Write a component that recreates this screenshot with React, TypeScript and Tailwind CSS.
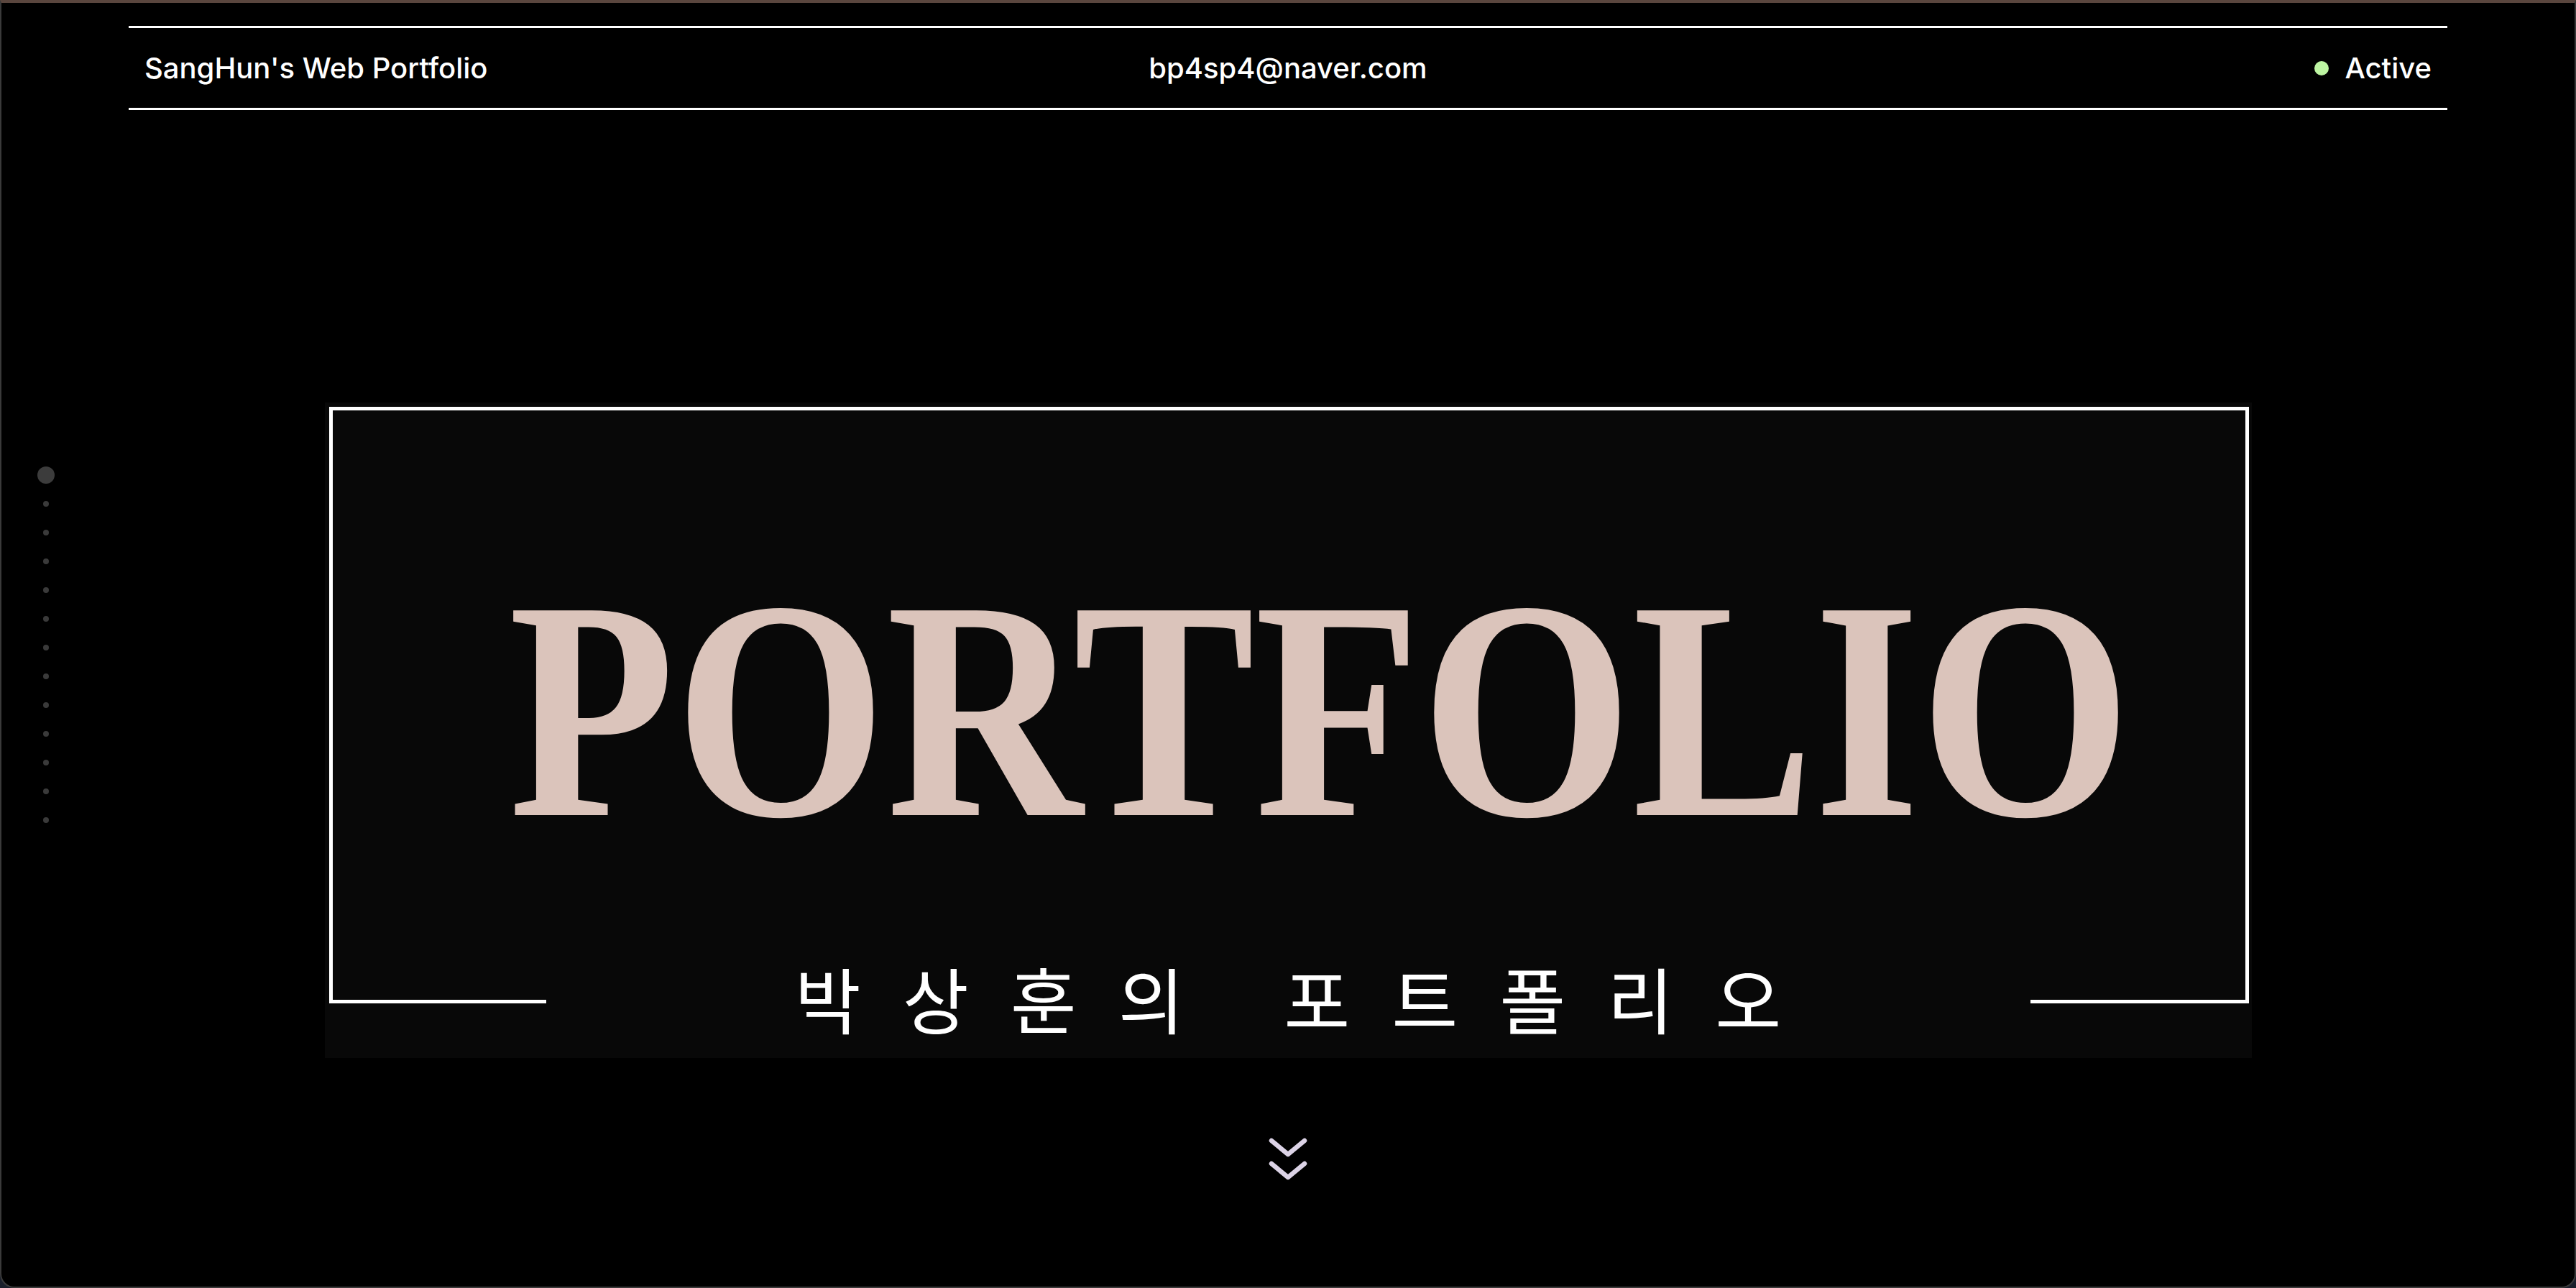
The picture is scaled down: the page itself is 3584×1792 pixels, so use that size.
export default function App() {
  const dots = Array.from({ length: 12 });

  return (
    <div className="h-[1792px] w-full bg-[#1a1f2b]">
      <div className="relative h-full overflow-hidden rounded-b-[20px] border-x-2 border-b-2 border-t-4 border-[#3a3a3a] border-t-[#5a463e] bg-black">
        {/* header */}
        <header className="mx-auto mt-[32px] grid h-[117px] w-[3226px] grid-cols-3 items-center border-y-[3px] border-white px-[22px] font-['Inter',sans-serif] text-[40px] font-medium text-white">
          <span className="justify-self-start">SangHun's Web Portfolio</span>
          <span className="justify-self-center">bp4sp4@naver.com</span>
          <span className="flex items-center gap-[22px] justify-self-end">
            <span className="h-[20px] w-[20px] rounded-full bg-[#bdf5a2]"></span>
            Active
          </span>
        </header>

        {/* side nav dots */}
        <nav className="absolute left-[42px] top-[637px] flex w-[40px] flex-col">
          <div className="flex h-[40px] items-center justify-center">
            <span className="h-[24px] w-[24px] rounded-full bg-[#3c3c3c]"></span>
          </div>
          {dots.map((_, i) => (
            <div key={i} className="flex h-[40px] items-center justify-center">
              <span className="h-[8px] w-[8px] rounded-full bg-[#3a3a3a]"></span>
            </div>
          ))}
        </nav>

        {/* hero */}
        <section className="mx-auto mt-[407px] h-[912px] w-[2681px] bg-[#080808] pl-[6px] pr-[4px] pt-[6px]">
          <div className="flex flex-col">
            <div className="flex h-[774px] justify-center border-x-[5px] border-t-[5px] border-white pl-[86px] pt-[199px]">
              <h1 className="scale-x-[0.87] whitespace-nowrap font-['Liberation_Serif',serif] text-[435px] font-bold leading-none text-[#dbc4bb]">
                PORTFOLIO
              </h1>
            </div>
            <div className="flex items-start">
              <div className="h-[56px] w-[302px] border-b-[5px] border-l-[5px] border-white"></div>
              <div className="flex flex-1 justify-center">
                <p className="-mt-[2px] whitespace-nowrap pl-[58px] font-['Noto_Sans_CJK_KR',sans-serif] text-[100px] font-normal leading-none tracking-[58px] text-white">
                  박상훈의 포트폴리오
                </p>
              </div>
              <div className="h-[56px] w-[304px] border-b-[5px] border-r-[5px] border-white"></div>
            </div>
          </div>
        </section>

        {/* scroll hint */}
        <div className="mt-[105px] flex justify-center">
          <svg width="62" height="72" viewBox="0 0 62 72" fill="none" stroke="#dcd3e6" strokeWidth="6.5" strokeLinecap="round" strokeLinejoin="round">
            <polyline points="8,10 31,29 54,10" />
            <polyline points="8,42 31,61 54,42" />
          </svg>
        </div>
      </div>
    </div>
  );
}
